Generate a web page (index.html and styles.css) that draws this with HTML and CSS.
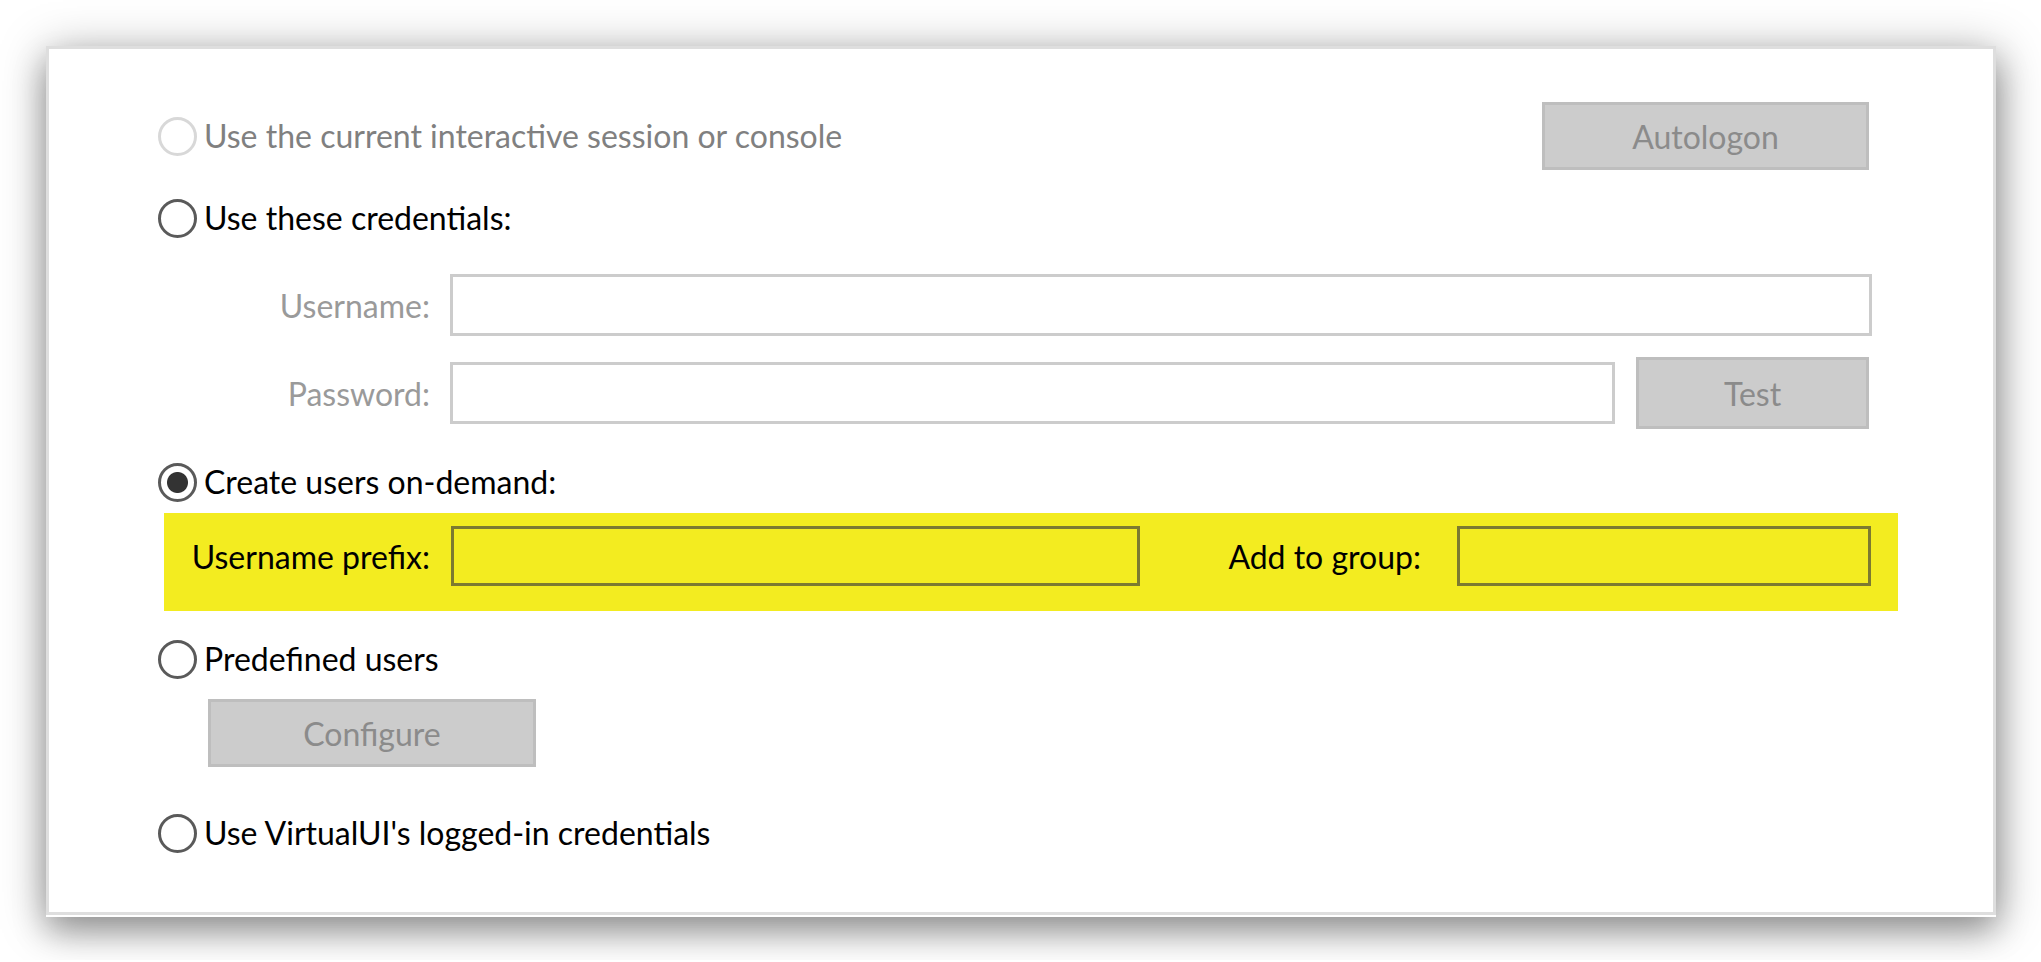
FILE: index.html
```html
<!DOCTYPE html>
<html lang="en">
<head>
    <meta charset="UTF-8">
    <title>Session credentials</title>
    <link rel="stylesheet" href="styles.css">
</head>
<body>
    <div class="panel">
        <div class="row first">
            <label class="option disabled"><input type="radio" name="mode" disabled>Use the current interactive session or console</label>
            <button class="btn autologon" disabled>Autologon</button>
        </div>

        <label class="option gap-28"><input type="radio" name="mode">Use these credentials:</label>
        <div class="field user-row">
            <span class="field-label">Username:</span>
            <input type="text" class="box user-box" disabled>
        </div>
        <div class="field pass-row">
            <span class="field-label">Password:</span>
            <input type="password" class="box pass-box" disabled>
            <button class="btn test" disabled>Test</button>
        </div>

        <label class="option gap-33"><input type="radio" name="mode" checked>Create users on-demand:</label>
        <div class="highlight">
            <span class="hl-label prefix-label">Username prefix:</span>
            <input type="text" class="box hl-box prefix-box">
            <span class="hl-label group-label">Add to group:</span>
            <input type="text" class="box hl-box group-box">
        </div>

        <label class="option gap-28"><input type="radio" name="mode">Predefined users</label>
        <button class="btn configure" disabled>Configure</button>

        <label class="option gap-46"><input type="radio" name="mode">Use VirtualUI's logged-in credentials</label>
    </div>
</body>
</html>
```

FILE: styles.css
```css
html, body { background-color: #ffffff; }
body { margin: 0; padding: 46px 0 45px 46px; font-family: Lato, "Liberation Sans", Arial, sans-serif; font-size: 32px; color: #000; }
.panel { box-sizing: border-box; width: 1950px; padding: 53px 121px 59px 109px; background-color: #fff; border: 3px solid #dedede; box-shadow: 0 2px 0 #fff, 0 18px 30px rgba(0,0,0,0.26), 2px 6px 44px rgba(0,0,0,0.34); display: flex; flex-direction: column; align-items: flex-start; }

.row { display: flex; align-items: center; justify-content: space-between; align-self: stretch; }
.first { height: 68px; }

.option { display: flex; align-items: center; gap: 7px; height: 40px; line-height: 40px; white-space: nowrap; }
.option.disabled { color: #808080; }
.gap-28 { margin-top: 28px; }
.gap-33 { margin-top: 33px; }
.gap-46 { margin-top: 46px; }

input[type="radio"] { appearance: none; -webkit-appearance: none; margin: 0; width: 39px; height: 39px; box-sizing: border-box; border: 3px solid #5a5a5a; border-radius: 50%; background: #fff; flex: none; }
input[type="radio"]:checked { background: radial-gradient(circle, #333 0 10px, #fff 11px); }
input[type="radio"]:disabled { border-color: #d8d8d8; }

.btn { box-sizing: border-box; font: inherit; color: #8b8b8b; background-color: #cccccc; border: 3px solid #bebebe; padding: 0; }
.autologon { width: 327px; height: 68px; margin-right: 3px; }
.test { width: 233px; height: 72px; margin-left: 21px; }
.configure { width: 328px; height: 68px; margin: 20px 0 0 50px; }

.field { display: flex; align-items: center; }
.user-row { margin-top: 36px; }
.pass-row { margin-top: 21px; }
.field-label { width: 272px; margin-right: 20px; text-align: right; color: #9a9a9a; }

.box { box-sizing: border-box; height: 62px; margin: 0; background: #fff; border: 3px solid #cccccc; font: inherit; }
.user-box { width: 1422px; }
.pass-box { width: 1165px; }

.highlight { box-sizing: border-box; display: flex; align-items: center; margin: 11px 0 0 6px; width: 1734px; height: 98px; padding: 0 0 12px 0; background-color: #f3ec20; }
.hl-label { text-align: right; white-space: nowrap; }
.prefix-label { width: 266px; margin-right: 21px; }
.group-label { width: 281px; margin-right: 36px; }
.hl-box { height: 60px; background-color: #f3ec20; border-color: #7c7a30; }
.prefix-box { width: 689px; }
.group-box { width: 414px; }
```
